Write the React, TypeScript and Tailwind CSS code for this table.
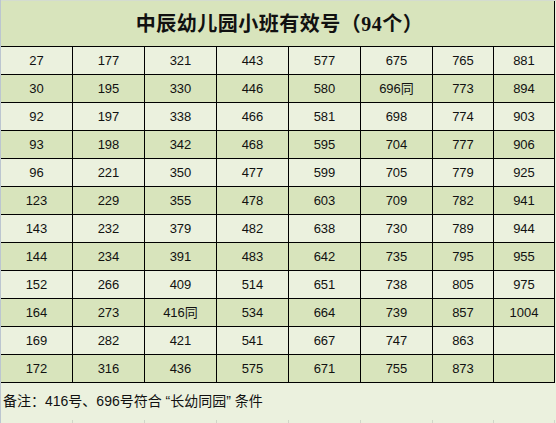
import React from 'react';

const cols: string[][] = [
  ['27', '30', '92', '93', '96', '123', '143', '144', '152', '164', '169', '172'],
  ['177', '195', '197', '198', '221', '229', '232', '234', '266', '273', '282', '316'],
  ['321', '330', '338', '342', '350', '355', '379', '391', '409', '416同', '421', '436'],
  ['443', '446', '466', '468', '477', '478', '482', '483', '514', '534', '541', '575'],
  ['577', '580', '581', '595', '599', '603', '638', '642', '651', '664', '667', '671'],
  ['675', '696同', '698', '704', '705', '709', '730', '735', '738', '739', '747', '755'],
  ['765', '773', '774', '777', '779', '782', '789', '795', '805', '857', '863', '873'],
  ['881', '894', '903', '906', '925', '941', '944', '955', '975', '1004', '', ''],
];

const widths = ['w-[72px]', 'w-[72px]', 'w-[72px]', 'w-[72px]', 'w-[72px]', 'w-[72px]', 'w-[61px]', 'w-[61px]'];

const font = { fontFamily: '"Liberation Sans", "Noto Sans CJK SC", sans-serif' };

export default function App() {
  const rows = cols[0].map((_, r) => cols.map((c) => c[r]));

  return (
    <div className="w-[556px] h-[423px] bg-[#ebf1de] border-l border-[#bcc6d0] overflow-hidden" style={font}>
      <div className="h-px bg-[#d4dcd0]" />
      <div className="h-[46px] w-[554px] bg-[#d8e4bc] border-b border-r border-black flex items-center justify-center">
        <span
          className="text-[20px] font-bold text-[#111] tracking-[0.5px] ml-1"
          style={{ fontFamily: '"Liberation Serif", "Noto Sans CJK SC", serif' }}
        >
          中辰幼儿园小班有效号（94个）
        </span>
      </div>
      {rows.map((row, r) => (
        <div key={r} className={`flex h-[28px] w-[554px] ${r % 2 === 0 ? 'bg-[#ebf1de]' : 'bg-[#d8e4bc]'}`}>
          {row.map((v, i) => (
            <div
              key={i}
              className={`${widths[i]} h-full border-r border-b border-black flex items-center justify-center text-[13px] text-[#111] pt-px`}
            >
              {v}
            </div>
          ))}
        </div>
      ))}
      <div className="h-[37px] flex items-center pl-[2px] text-[14px] text-[#111]">
        备注：416号、696号符合 “长幼同园” 条件
      </div>
      <div className="flex h-[4px]">
        {widths.map((w, i) => (
          <div key={i} className={`${w} h-full border-r border-[#cfd6c8]`} />
        ))}
      </div>
    </div>
  );
}
